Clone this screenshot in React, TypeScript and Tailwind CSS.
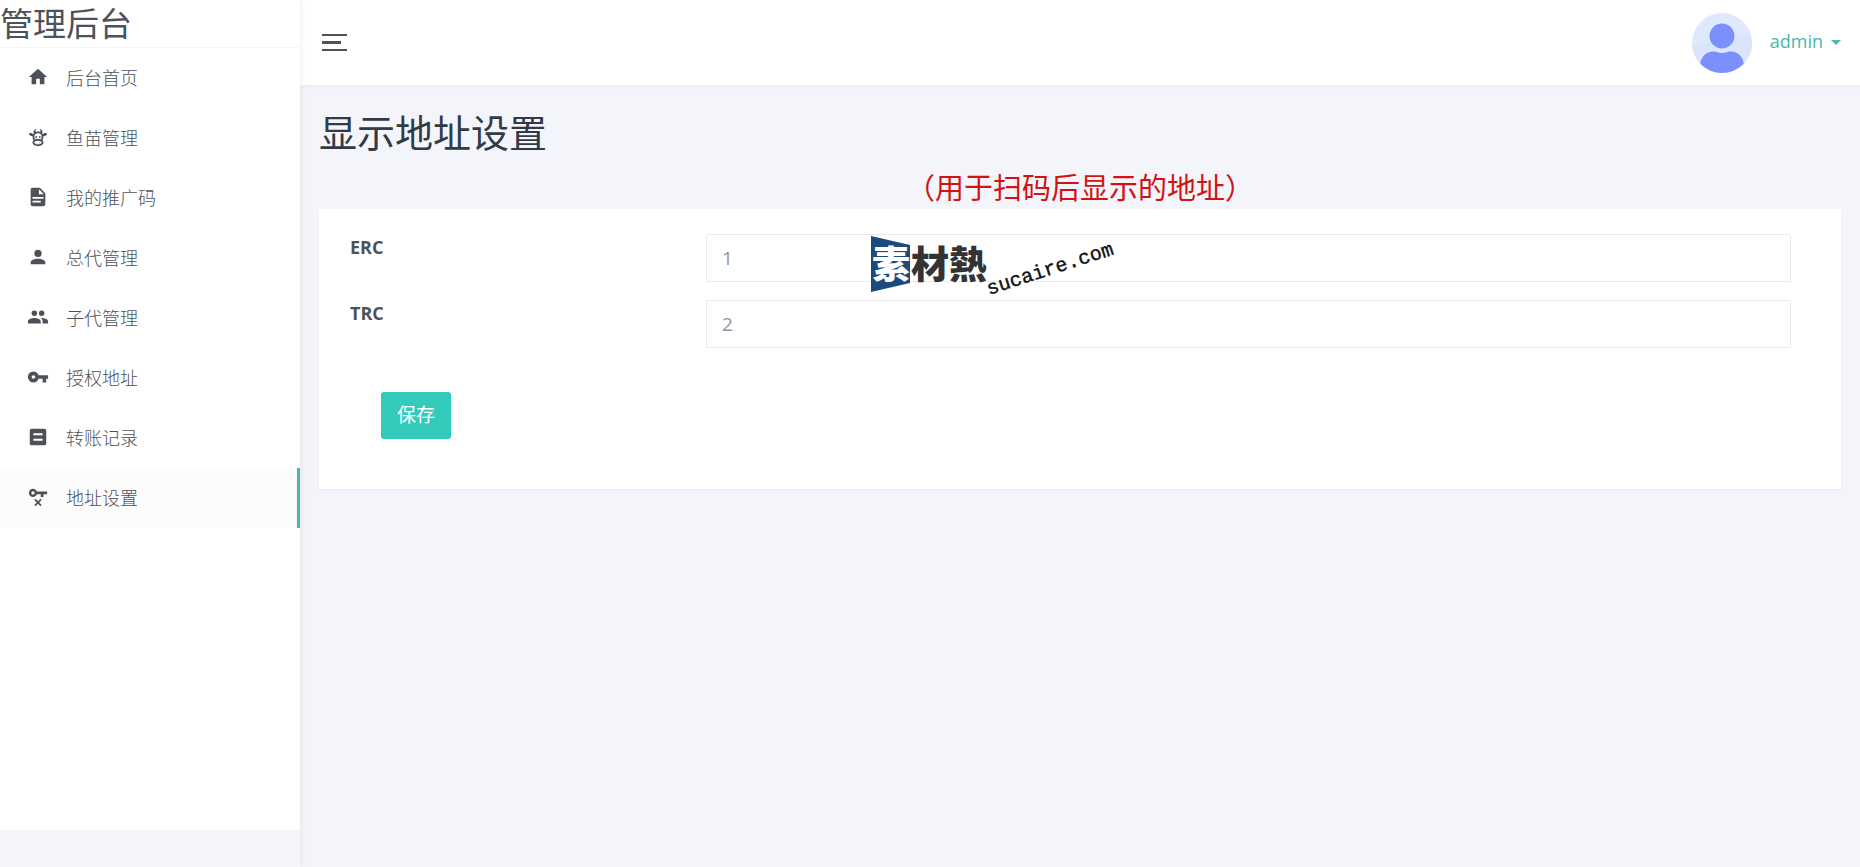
import { useState } from 'react';

const menu = [
	{ label: '后台首页', icon: 'M10,20V14H14V20H19V12H22L12,3L2,12H5V20H10Z' },
	{
		label: '鱼苗管理',
		icon: 'M10.5,18A0.5,0.5 0 0,1 11,18.5A0.5,0.5 0 0,1 10.5,19A0.5,0.5 0 0,1 10,18.5A0.5,0.5 0 0,1 10.5,18M13.5,18A0.5,0.5 0 0,1 14,18.5A0.5,0.5 0 0,1 13.5,19A0.5,0.5 0 0,1 13,18.5A0.5,0.5 0 0,1 13.5,18M10,11A1,1 0 0,1 11,12A1,1 0 0,1 10,13A1,1 0 0,1 9,12A1,1 0 0,1 10,11M14,11A1,1 0 0,1 15,12A1,1 0 0,1 14,13A1,1 0 0,1 13,12A1,1 0 0,1 14,11M18,18C18,20.21 15.31,22 12,22C8.69,22 6,20.21 6,18C6,17.1 6.45,16.27 7.2,15.6C6.45,14.6 6,13.35 6,12L6.12,10.78C5.58,10.93 4.93,10.93 4.4,10.78C3.38,10.5 1.84,9.35 2.07,8.55C2.3,7.75 4.21,7.6 5.23,7.9C5.82,8.07 6.45,8.5 6.82,8.96L7.39,8.15C6.79,7.05 7,4 10,3L9.91,3.14C9.63,3.58 8.91,4.97 9.67,6.47C10.39,6.17 11.17,6 12,6C12.83,6 13.61,6.17 14.33,6.47C15.09,4.97 14.37,3.58 14.09,3.14L14,3C17,4 17.21,7.05 16.61,8.15L17.18,8.96C17.55,8.5 18.18,8.07 18.77,7.9C19.79,7.6 21.7,7.75 21.93,8.55C22.16,9.35 20.62,10.5 19.6,10.78C19.07,10.93 18.42,10.93 17.88,10.78L18,12C18,13.35 17.55,14.6 16.8,15.6C17.55,16.27 18,17.1 18,18M12,16C9.79,16 8,16.9 8,18C8,19.1 9.79,20 12,20C14.21,20 16,19.1 16,18C16,16.9 14.21,16 12,16M12,14C13.12,14 14.17,14.21 15.07,14.56C15.65,13.87 16,13 16,12A4,4 0 0,0 12,8A4,4 0 0,0 8,12C8,13 8.35,13.87 8.93,14.56C9.83,14.21 10.88,14 12,14Z',
	},
	{ label: '我的推广码', icon: 'M13,9H18.5L13,3.5V9M6,2H14L20,8V20A2,2 0 0,1 18,22H6C4.89,22 4,21.1 4,20V4C4,2.89 4.89,2 6,2M15,18V16H6V18H15M18,14V12H6V14H18Z' },
	{ label: '总代管理', icon: 'M12,4A4,4 0 0,1 16,8A4,4 0 0,1 12,12A4,4 0 0,1 8,8A4,4 0 0,1 12,4M12,14C16.42,14 20,15.79 20,18V20H4V18C4,15.79 7.58,14 12,14Z' },
	{ label: '子代管理', icon: 'M16,13C15.71,13 15.38,13 15.03,13.05C16.19,13.89 17,15 17,16.5V19H23V16.5C23,14.17 18.33,13 16,13M8,13C5.67,13 1,14.17 1,16.5V19H15V16.5C15,14.17 10.33,13 8,13M8,11A3,3 0 0,0 11,8A3,3 0 0,0 8,5A3,3 0 0,0 5,8A3,3 0 0,0 8,11M16,11A3,3 0 0,0 19,8A3,3 0 0,0 16,5A3,3 0 0,0 13,8A3,3 0 0,0 16,11Z' },
	{ label: '授权地址', icon: 'M7,14A2,2 0 0,1 5,12A2,2 0 0,1 7,10A2,2 0 0,1 9,12A2,2 0 0,1 7,14M12.65,10C11.83,7.67 9.61,6 7,6A6,6 0 0,0 1,12A6,6 0 0,0 7,18C9.61,18 11.83,16.33 12.65,14H17V18H21V14H23V10H12.65Z' },
	{ label: '转账记录', icon: 'M5,3H19A2,2 0 0,1 21,5V19A2,2 0 0,1 19,21H5A2,2 0 0,1 3,19V5A2,2 0 0,1 5,3M7,8V10H17V8H7M7,14V16H17V14H7Z' },
	{ label: '地址设置', icon: 'M6.5,3A4.5,4.5 0 0,0 2,7.500A4.5,4.5 0 0,0 6.5,12C8.4,12 10,10.8 10.7,9H15V12H18V9H22V6H10.7C10,4.2 8.4,3 6.5,3M6.5,5.7A1.8,1.8 0 0,1 8.3,7.5A1.8,1.8 0 0,1 6.5,9.3A1.8,1.8 0 0,1 4.7,7.5A1.8,1.8 0 0,1 6.5,5.7M9.4,14L8,15.4L10.6,18L8,20.6L9.4,22L12,19.4L14.6,22L16,20.6L13.4,18L16,15.4L14.6,14L12,16.6Z' },
];

const Sidebar = () => (
	<aside className="relative flex w-[300px] shrink-0 flex-col pb-[37px] shadow-[0_0_8px_rgba(0,0,0,0.08)]">
		<div className="flex-1 bg-white">
			<div className="h-12 border-b border-[#f5f5f5] text-[33px] leading-[48px]">管理后台</div>
			<nav>
				{menu.map(({ label, icon }, index) => (
					<a
						key={label}
						href="#"
						className={
							index === menu.length - 1
								? 'flex h-[60px] items-center gap-[17px] border-r-[3px] border-[#4db6ac] bg-[#fcfcfc] pl-[27px] text-lg font-light'
								: 'flex h-[60px] items-center gap-[17px] pl-[27px] text-lg font-light'
						}
					>
						<svg viewBox="0 0 24 24" className="mb-[2px] size-[22px]" fill="currentColor">
							<path fillRule="evenodd" d={icon} />
						</svg>
						{label}
					</a>
				))}
			</nav>
		</div>
	</aside>
);

const Header = () => (
	<header className="flex h-[85px] items-center justify-between bg-white pr-[19px] pl-[22px] shadow-[0_1px_5px_rgba(0,0,0,0.05)]">
		<button type="button" aria-label="菜单" className="flex flex-col gap-[5px]">
			<span className="h-[2px] w-[25px] bg-[#4d5259]" />
			<span className="h-[3px] w-[19px] bg-[#4d5259]" />
			<span className="h-[2px] w-[25px] bg-[#4d5259]" />
		</button>
		<a href="#" className="flex items-center gap-[18px] text-[#4db6ac]">
			<svg viewBox="0 0 60 60" className="size-[60px]">
				<defs>
					<clipPath id="avatar">
						<circle cx="30" cy="30" r="30" />
					</clipPath>
				</defs>
				<g clipPath="url(#avatar)">
					<rect width="60" height="60" fill="#dfe9fe" />
					<path d="M0 32C20 30 40 26 60 18V60H0Z" fill="#dae5fc" />
					<circle cx="30" cy="23" r="12.5" fill="#7b90fc" />
					<path d="M8 54C8 44 14 38.5 21 38.5C25 38.5 26 40 30 40C34 40 35 38.5 39 38.5C46 38.5 52 44 52 54V60H8Z" fill="#7b90fc" />
				</g>
			</svg>
			<span className="flex items-center gap-2 pb-1 text-lg">
				admin
				<svg viewBox="0 0 10 5" className="mt-1 h-[5px] w-[10px]" fill="currentColor">
					<path d="M0 0H10L5 5Z" />
				</svg>
			</span>
		</a>
	</header>
);

const Watermark = () => (
	<div className="pointer-events-none absolute top-[7px] left-[552px]">
		<svg viewBox="0 -20 270 100" className="h-[100px] w-[270px]">
			<path d="M0 0L39 9V47L0 56Z" fill="#1c4a80" />
			<g fontFamily="'Noto Sans CJK SC', sans-serif" fontSize="38" fontWeight="900">
				<text x="1" y="42" fill="#fff">素</text>
				<text x="40" y="42" fill="#333">材熱</text>
			</g>
			<text
				x="118"
				y="59"
				transform="rotate(-18 118 59)"
				fontFamily="'Liberation Mono', monospace"
				fontSize="20"
				fill="#111"
				stroke="#111"
				strokeWidth="0.4"
			>
				sucaire.com
			</text>
		</svg>
	</div>
);

export default function App() {
	const [address, setAddress] = useState({ ERC: '1', TRC: '2' });

	return (
		<div className="flex min-h-screen bg-[#f4f5fa] font-['Open_Sans','Noto_Sans_CJK_SC',sans-serif] text-[#4d5259]">
			<Sidebar />
			<div className="min-w-0 flex-1">
				<Header />
				<main className="px-[19px] pt-[22px]">
					<h1 className="text-[38px] leading-[50px] text-[#313a46]">显示地址设置</h1>
					<p className="mt-3 mb-[2px] text-center text-[29px] leading-[38px] text-[#d11313]">（用于扫码后显示的地址）</p>
					<form
						className="relative rounded-[3px] bg-white px-[31px] pt-[25px] pb-[50px] shadow-[0_2px_4px_rgba(0,0,0,0.04)]"
						onSubmit={(e) => e.preventDefault()}
					>
						{(['ERC', 'TRC'] as const).map((field) => (
							<div key={field} className="mb-[18px] flex pr-[19px]">
								<label htmlFor={field} className="w-[356px] shrink-0 text-lg leading-[26px] font-bold">
									{field}
								</label>
								<input
									id={field}
									value={address[field]}
									onChange={(e) => setAddress({ ...address, [field]: e.target.value })}
									className="h-12 min-w-0 flex-1 rounded-[2px] border border-[#ebebeb] bg-transparent px-[15px] text-[19px] text-[#8b95a5]"
								/>
							</div>
						))}
						<button type="submit" className="mt-[26px] ml-[31px] h-[47px] rounded-[3px] bg-[#33cabb] px-4 text-[19px] text-white">
							保存
						</button>
						<Watermark />
					</form>
				</main>
			</div>
		</div>
	);
}
